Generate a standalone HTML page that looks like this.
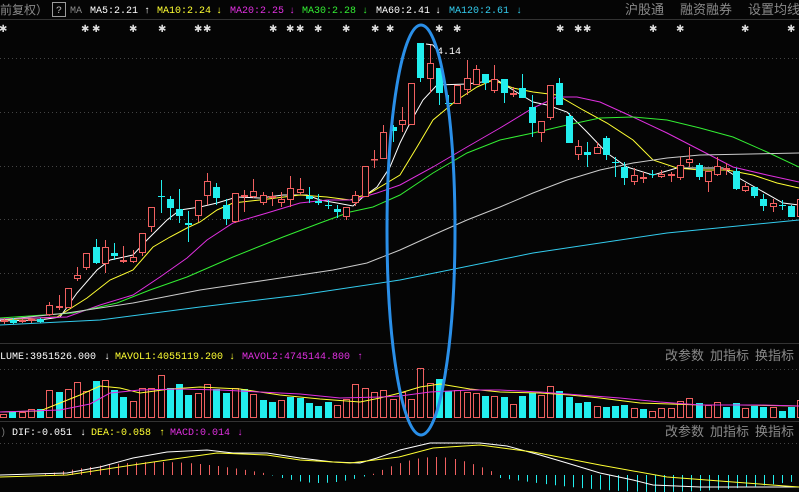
<!DOCTYPE html>
<html><head><meta charset="utf-8"><style>
html,body{margin:0;padding:0;background:#050505;width:799px;height:492px;overflow:hidden}
svg{display:block}
text{font-family:"Liberation Mono","Noto Sans CJK SC",monospace;font-size:10px}
.cn{font-family:"Liberation Sans","Noto Sans CJK SC",sans-serif;font-size:13px;fill:#8a8a8a}
</style></head><body>
<svg id="s" width="799" height="492" xmlns="http://www.w3.org/2000/svg">
<rect width="799" height="492" fill="#050505"/>
<text x="0" y="14" class="cn" style="font-size:12px">前复权）</text>
<rect x="52.5" y="2.5" width="13" height="14" fill="none" stroke="#9a9a9a"/>
<text x="56" y="13" fill="#bbb">?</text>
<text x="70" y="13" fill="#888">MA</text>
<text x="90" y="13" fill="#fff">MA5:2.21</text><text x="144" y="13" fill="#fff">↑</text>
<text x="157" y="13" fill="#ffff33">MA10:2.24</text><text x="216" y="13" fill="#ffff33">↓</text>
<text x="230" y="13" fill="#e030e0">MA20:2.25</text><text x="289" y="13" fill="#e030e0">↓</text>
<text x="302" y="13" fill="#33ee33">MA30:2.28</text><text x="362" y="13" fill="#33ee33">↓</text>
<text x="376" y="13" fill="#fff">MA60:2.41</text><text x="435" y="13" fill="#fff">↓</text>
<text x="449" y="13" fill="#33ccee">MA120:2.61</text><text x="516" y="13" fill="#33ccee">↓</text>
<text x="625" y="14" class="cn">沪股通</text>
<text x="680" y="14" class="cn">融资融券</text>
<text x="748" y="14" class="cn">设置均线</text>
<line x1="0" y1="19.5" x2="799" y2="19.5" stroke="#333"/>
<g id="stars" fill="#ddd"></g>
<g stroke="#444" stroke-dasharray="1,3">
<line x1="0" y1="58.5" x2="799" y2="58.5"/><line x1="0" y1="112.5" x2="799" y2="112.5"/>
<line x1="0" y1="166.5" x2="799" y2="166.5"/><line x1="0" y1="219.5" x2="799" y2="219.5"/>
<line x1="0" y1="273.5" x2="799" y2="273.5"/>
<line x1="0" y1="369.5" x2="799" y2="369.5"/><line x1="0" y1="443.5" x2="799" y2="443.5"/>
</g>
<line x1="0" y1="343.5" x2="799" y2="343.5" stroke="#333"/>
<line x1="0" y1="421.5" x2="799" y2="421.5" stroke="#333"/>
<g id="ma" fill="none" stroke-width="1"></g>
<g id="cd"></g>
<g id="vol"></g>
<g id="macd"></g>
<text x="437" y="54" fill="#fff">4.14</text>
<polyline points="426,44 433,45 436,49" fill="none" stroke="#fff"/>
<text x="0" y="359" fill="#fff">LUME:3951526.000</text><text x="104" y="359" fill="#fff">↓</text>
<text x="115" y="359" fill="#ffff33">MAVOL1:4055119.200</text><text x="229" y="359" fill="#ffff33">↓</text>
<text x="242" y="359" fill="#e030e0">MAVOL2:4745144.800</text><text x="357" y="359" fill="#e030e0">↑</text>
<text x="665" y="360" class="cn">改参数</text><text x="710" y="360" class="cn">加指标</text><text x="755" y="360" class="cn">换指标</text>
<text x="0" y="435" fill="#777">)</text>
<text x="12" y="435" fill="#fff">DIF:-0.051</text><text x="80" y="435" fill="#fff">↓</text>
<text x="91" y="435" fill="#ffff33">DEA:-0.058</text><text x="159" y="435" fill="#ffff33">↑</text>
<text x="170" y="435" fill="#e030e0">MACD:0.014</text><text x="237" y="435" fill="#e030e0">↓</text>
<text x="665" y="436" class="cn">改参数</text><text x="710" y="436" class="cn">加指标</text><text x="755" y="436" class="cn">换指标</text>
<ellipse cx="421" cy="230" rx="34" ry="205" fill="none" stroke="#2a8fe8" stroke-width="3"/>
</svg>
<script>
var NS="http://www.w3.org/2000/svg";
function el(p,t,a){var e=document.createElementNS(NS,t);for(var k in a)e.setAttribute(k,a[k]);document.getElementById(p).appendChild(e);return e;}
var R="#f06060",C="#22eeee";
[3,85,96,133,162,198,207,273,290,300,318,346,375,390,439,457,560,578,587,653,680,745,791].forEach(function(x){el("stars","text",{x:x-4,y:32,fill:"#ddd",style:"font-size:10px;font-family:'DejaVu Sans',sans-serif"}).textContent="✱";});
var cds=[[4,"g",320,322,318,324],[13,"c",320,323,318,324],[22,"r",320,322,319,323],[31,"r",319,321,318,323],[40,"c",319,322,318,323],
[49,"r",305,315,302,316],[59,"r",306,308,295,310],[68,"r",288,308,288,308],[77,"r",275,279,267,281],[86,"r",253,268,253,270],
[96,"c",247,263,239,264],[105,"r",247,264,240,273],[114,"c",253,256,243,260],[123,"r",260,262,246,263],[133,"r",257,262,250,263],
[142,"r",233,253,233,256],[151,"r",207,227,207,232],[161,"c",196,197,180,213],[170,"c",199,208,196,220],[179,"c",209,216,189,223],
[188,"c",223,225,211,242],[198,"r",200,216,200,222],[207,"r",181,196,173,205],[216,"c",187,198,183,205],[226,"c",205,219,199,225],
[235,"r",193,222,193,223],[244,"r",195,197,190,212],[253,"r",191,197,179,198],[263,"r",195,203,192,205],[272,"r",196,198,192,206],
[281,"r",199,203,192,207],[290,"r",188,200,176,207],[300,"r",189,193,178,195],[309,"c",196,199,187,203],[318,"c",201,203,194,205],
[328,"c",205,206,200,209],[337,"c",209,212,205,218],[346,"r",207,217,207,220],[355,"r",195,203,191,206],[365,"r",166,197,166,197],
[374,"r",159,160,150,168],[383,"r",132,159,125,159],[393,"c",127,131,125,142],[402,"r",120,125,107,132],[411,"r",83,125,83,125],
[420,"c",43,78,43,82],[430,"r",63,79,45,93],[439,"c",68,93,68,105],[448,"c",103,104,95,112],[457,"r",85,104,85,104],
[467,"r",78,90,60,95],[476,"r",69,85,65,85],[485,"c",74,83,74,90],[494,"r",79,91,65,93],[504,"c",79,93,79,103],
[513,"r",93,95,87,97],[522,"c",88,98,74,98],[532,"c",107,123,95,137],[541,"r",121,133,121,142],[550,"r",85,118,85,120],
[559,"c",83,105,78,105],[569,"c",116,143,113,143],[578,"r",146,155,140,160],[587,"c",152,155,142,167],[597,"r",147,154,142,154],
[606,"c",138,155,136,160],[615,"c",162,163,157,177],[624,"c",167,178,162,185],[634,"r",175,182,168,185],[643,"r",177,179,172,183],
[652,"c",174,175,170,178],[661,"r",174,177,170,178],[671,"r",174,176,172,182],[680,"r",165,178,157,180],[689,"r",159,163,147,167],
[699,"c",165,177,163,180],[708,"r",171,182,171,192],[717,"r",166,175,157,176],[726,"r",168,170,163,175],[736,"c",171,189,168,190],
[745,"r",186,191,183,192],[754,"c",187,196,187,198],[763,"c",199,206,194,211],[773,"r",203,207,199,212],[782,"c",205,206,200,210],
[791,"c",206,217,205,217],[800,"r",199,217,199,217]];
cds.forEach(function(d){var col=d[1]=="c"?C:R;var x=d[0];
el("cd","line",{x1:x+.5,y1:d[4],x2:x+.5,y2:d[5],stroke:col});
var h=Math.max(1,d[3]-d[2]);
if(d[1]=="c")el("cd","rect",{x:x-3,y:d[2],width:7,height:h,fill:col});
else el("cd","rect",{x:x-2.5,y:d[2]+.5,width:6,height:Math.max(.5,h-1),fill:"#050505",stroke:col});});
var mas=[["#fff","0,321 40,320 60,317 77,293 97,270 110,260 133,255 147,240 167,220 180,210 200,207 217,203 237,197 260,198 283,195 307,195 320,200 337,203 353,206 363,197 377,187 390,167 400,143 410,123 423,100 437,85 467,84 497,80 513,90 533,102 547,105 567,112 587,132 607,153 627,167 653,175 677,168 700,168 723,168 737,177 760,190 783,203 799,205"],
["#ffff33","0,320 57,317 87,298 110,280 133,270 153,247 170,237 187,228 200,222 217,210 233,203 260,200 300,195 327,197 350,200 370,193 400,175 417,147 433,120 457,100 477,87 493,80 513,88 533,92 557,95 583,110 607,123 633,140 653,160 677,168 700,170 727,170 753,175 777,183 799,188"],
["#e030e0","0,319 67,317 100,305 133,295 160,277 187,258 207,240 233,223 267,213 300,203 327,200 353,200 377,193 400,185 433,167 467,147 500,128 533,108 557,97 577,97 600,102 633,117 667,133 700,150 733,167 767,175 799,182"],
["#33ee33","0,318 73,313 117,303 150,290 187,277 233,257 283,237 320,223 350,212 373,207 400,195 433,173 467,153 500,140 533,133 567,125 600,118 633,117 667,120 700,128 733,137 767,152 799,167"],
["#cccccc","0,320 67,313 133,303 200,290 267,280 333,270 367,263 400,250 433,235 467,220 500,207 533,193 567,180 600,170 633,163 667,158 700,155 799,153"],
["#33ccee","0,325 100,320 200,307 300,295 400,280 533,253 667,233 799,220"]];
mas.forEach(function(m){el("ma","polyline",{points:m[1],stroke:m[0]});});
var vb=418;
var vols=[[3,"r",414],[12,"c",412],[22,"r",412],[31,"r",409],[40,"c",409],[49,"r",390],[59,"c",392],[68,"r",389],[77,"r",382],[86,"r",391],[96,"c",381],[105,"r",380],[114,"c",390],[123,"c",397],[133,"r",401],[142,"r",388],[151,"r",388],[161,"r",375],[170,"c",388],[179,"c",384],[188,"c",395],[198,"r",393],[207,"r",384],[216,"c",389],[226,"c",393],[235,"r",388],[244,"c",389],[253,"r",394],[263,"c",400],[272,"c",402],[281,"r",400],[290,"c",397],[300,"c",398],[309,"c",403],[318,"c",406],[328,"c",402],[337,"r",405],[346,"r",399],[355,"r",384],[365,"r",388],[374,"r",392],[383,"r",390],[393,"r",399],[402,"r",392],[411,"r",399],[420,"r",368],[430,"r",383],[439,"c",379],[448,"c",391],[457,"r",390],[467,"r",392],[476,"r",393],[485,"c",396],[494,"r",396],[504,"c",397],[513,"r",404],[522,"c",396],[532,"c",393],[541,"r",395],[550,"r",386],[559,"c",391],[569,"c",397],[578,"c",403],[587,"c",402],[597,"r",406],[606,"c",407],[615,"c",406],[624,"c",405],[634,"r",408],[643,"c",409],[652,"r",411],[661,"r",408],[671,"r",408],[680,"r",401],[689,"r",398],[699,"c",403],[708,"r",405],[717,"r",402],[726,"c",407],[736,"c",403],[745,"r",408],[754,"c",406],[763,"c",407],[773,"r",407],[782,"c",411],[791,"c",407],[800,"r",400]];
vols.forEach(function(v){var x=v[0];
if(v[1]=="c")el("vol","rect",{x:x-3,y:v[2],width:7,height:vb-v[2],fill:C});
else el("vol","rect",{x:x-2.5,y:v[2]+.5,width:6,height:vb-v[2]-1,fill:"none",stroke:R});});
el("vol","polyline",{points:"0,412 40,411 60,403 80,395 100,386 120,388 140,393 170,389 200,387 240,389 280,395 320,399 360,402 380,398 400,393 420,387 440,384 470,389 500,392 540,393 570,395 600,398 640,403 700,405 740,405 799,406",fill:"none",stroke:"#ffff33"});
el("vol","polyline",{points:"0,412 60,410 90,404 110,393 140,390 180,389 220,390 260,392 300,394 340,398 380,397 400,396 430,392 470,390 500,390 540,392 580,395 620,398 660,402 700,405 760,405 799,406",fill:"none",stroke:"#e030e0"});
var z=475;
for(var x=45;x<800;x+=9.1){var h=0;var xi=Math.round(x);
 if(xi<270){h=-Math.max(0,13*Math.sin(Math.PI*(xi-40)/235));}
 else if(xi<370){h=8*Math.sin(Math.PI*(xi-270)/100);}
 else if(xi<500){h=-Math.max(0,18*Math.sin(Math.PI*(xi-370)/130));}
 else {h=Math.max(1,14*Math.sin(Math.PI*(xi-500)/320)+3);}
 if(Math.abs(h)<0.5)continue;
 el("macd","line",{x1:xi+.5,y1:z,x2:xi+.5,y2:z+h,stroke:h<0?R:C});}
el("macd","polyline",{points:"0,475 67,473 100,467 133,458 167,452 207,450 233,453 267,453 300,458 333,462 360,463 377,458 400,450 430,443 480,443 507,446 540,455 567,463 600,473 633,480 653,485 700,487 799,487",fill:"none",stroke:"#fff"});
el("macd","polyline",{points:"0,477 67,475 133,465 167,460 217,453 267,455 300,460 350,463 399,457 433,448 480,445 533,452 600,465 667,477 733,482 799,487",fill:"none",stroke:"#ffff33"});
</script>
</body></html>
